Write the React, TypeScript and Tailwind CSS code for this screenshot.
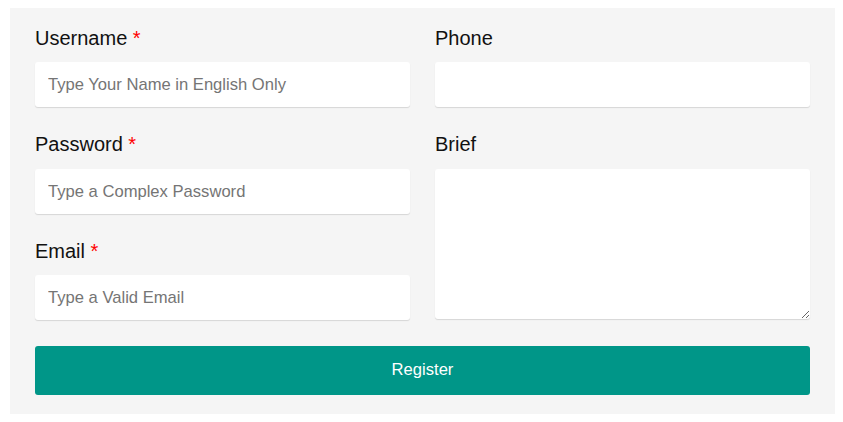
import React from "react";

const font = { fontFamily: '"Liberation Sans", Arial, sans-serif' };

function Label({ text, required }: { text: string; required?: boolean }) {
  return (
    <label className="block h-[24px] leading-[24px] text-[20px] text-[#111]">
      {text}
      {required && <span className="text-[#ff0000]"> *</span>}
    </label>
  );
}

const inputCls =
  "block w-full h-[45px] rounded-[3px] bg-white px-[13px] text-[16.6px] text-[#333] placeholder:text-[#757575] outline-none shadow-[0_1px_1px_rgba(0,0,0,0.13)]";

export default function App() {
  return (
    <div style={font} className="pt-[8px] pl-[10px]">
      <form className="w-[825px] h-[406px] bg-[#f5f5f5] px-[25px] pt-[18px]">
        <div className="grid grid-cols-2 gap-x-[25px]">
          <div className="flex flex-col">
            <Label text="Username" required />
            <input className={inputCls + " mt-[12px]"} placeholder="Type Your Name in English Only" />
            <div className="mt-[25px]">
              <Label text="Password" required />
              <input className={inputCls + " mt-[13px]"} type="password" placeholder="Type a Complex Password" />
            </div>
            <div className="mt-[25px]">
              <Label text="Email" required />
              <input className={inputCls + " mt-[12px]"} placeholder="Type a Valid Email" />
            </div>
          </div>
          <div className="flex flex-col">
            <Label text="Phone" />
            <input className={inputCls + " mt-[12px]"} />
            <div className="mt-[25px]">
              <Label text="Brief" />
              <textarea className={inputCls + " mt-[13px] h-[150px] py-[10px]"} />
            </div>
          </div>
        </div>
        <button
          type="button"
          className="mt-[26px] block w-full h-[49px] rounded-[3px] bg-[#009688] text-white text-[16.6px]"
        >
          Register
        </button>
      </form>
    </div>
  );
}
